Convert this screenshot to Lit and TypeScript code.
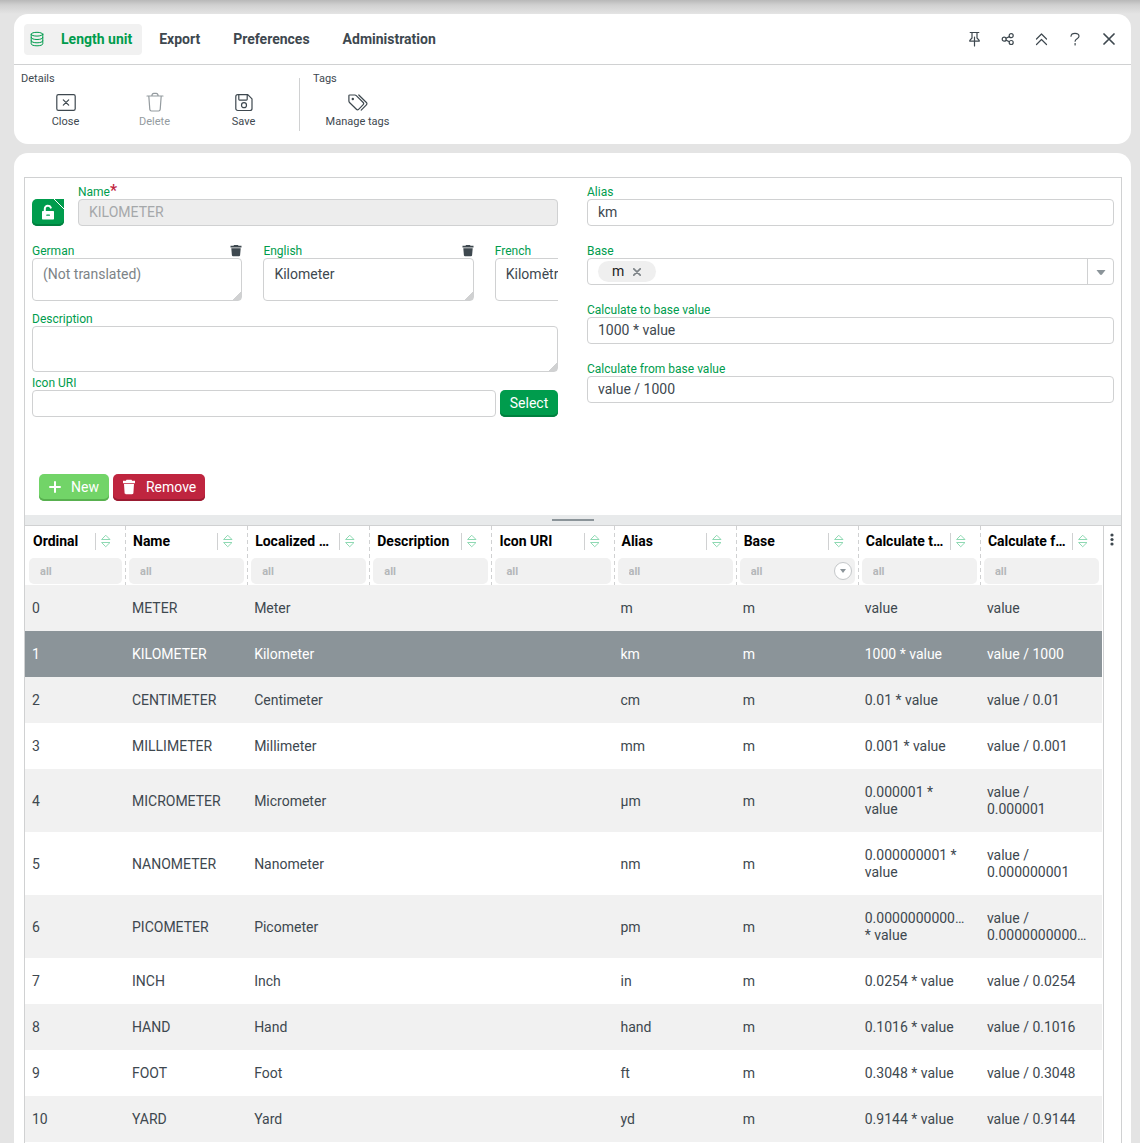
import { LitElement, html, css, svg, nothing } from "lit";
import { customElement, state } from "lit/decorators.js";

interface Unit {
  name: string;
  label: string;
  alias: string;
  to: string;
  from: string;
}

const UNITS: Unit[] = [
  { name: "METER", label: "Meter", alias: "m", to: "value", from: "value" },
  { name: "KILOMETER", label: "Kilometer", alias: "km", to: "1000 * value", from: "value / 1000" },
  { name: "CENTIMETER", label: "Centimeter", alias: "cm", to: "0.01 * value", from: "value / 0.01" },
  { name: "MILLIMETER", label: "Millimeter", alias: "mm", to: "0.001 * value", from: "value / 0.001" },
  { name: "MICROMETER", label: "Micrometer", alias: "µm", to: "0.000001 * value", from: "value / 0.000001" },
  { name: "NANOMETER", label: "Nanometer", alias: "nm", to: "0.000000001 * value", from: "value / 0.000000001" },
  { name: "PICOMETER", label: "Picometer", alias: "pm", to: "0.0000000000… * value", from: "value / 0.0000000000…" },
  { name: "INCH", label: "Inch", alias: "in", to: "0.0254 * value", from: "value / 0.0254" },
  { name: "HAND", label: "Hand", alias: "hand", to: "0.1016 * value", from: "value / 0.1016" },
  { name: "FOOT", label: "Foot", alias: "ft", to: "0.3048 * value", from: "value / 0.3048" },
  { name: "YARD", label: "Yard", alias: "yd", to: "0.9144 * value", from: "value / 0.9144" },
];

const COLUMNS = [
  "Ordinal",
  "Name",
  "Localized …",
  "Description",
  "Icon URI",
  "Alias",
  "Base",
  "Calculate t…",
  "Calculate f…",
];

const icon = (w: number, h: number, body: unknown, cls = "") =>
  html`<svg class="icon ${cls}" width=${w} height=${h} viewBox="0 0 ${w} ${h}" aria-hidden="true">${body}</svg>`;

const icons = {
  database: icon(14, 16, svg`<ellipse cx="7" cy="3.2" rx="5.800" ry="1.900"/><path d="M1.200 3.200v9.600c0 1.200 2.600 2 5.800 2s5.800-.8 5.800-2V3.200M1.200 6.500c0 1.200 2.600 2 5.800 2s5.800-.8 5.800-2M1.200 9.800c0 1.200 2.600 2 5.800 2s5.800-.8 5.800-2"/>`, "thin"),
  close: icon(20, 20, svg`<rect x=".8" y="2.600" width="18.400" height="15.800" rx="1.600"/><path d="M7.300 7.800l5.400 5.400M12.700 7.800l-5.400 5.400"/>`),
  trash: icon(18, 20, svg`<path d="M1 4h16M2.800 4l1 13.400c.1 1 .7 1.600 1.600 1.600h7.200c.9 0 1.500-.6 1.600-1.600l1-13.400M5.800 4c.2-1.600.9-2.600 2-2.600h2.400c1.100 0 1.800 1 2 2.600"/>`),
  save: icon(18, 20, svg`<path d="M2.800 2.700h10l4.200 4.200v9.600c0 1.200-.8 2-2 2H2.800c-1.200 0-2-.8-2-2V4.700c0-1.200.8-2 2-2zM3.800 2.700v4.600c0 .5.300.8.800.8h6.800c.5 0 .8-.3.800-.8V2.700"/><circle cx="9" cy="13.200" r="2.500"/>`),
  tags: icon(20, 20, svg`<path d="M.9 3.600v5.500c0 .6.200 1 .6 1.400l6.900 6.800c.7.700 1.500.7 2.200 0l4.600-4.600c.7-.7.7-1.500 0-2.200L8.300 3.600C7.900 3.200 7.500 3 6.900 3H1.800c-.6 0-.9.200-.9.600zM10.800 3l7.600 7.500c.7.700.7 1.600 0 2.300l-5.200 5.300"/><circle cx="4.800" cy="7" r=".6"/>`),
  pin: icon(14, 16, svg`<path d="M4.200 1.500h8.600M6 1.500V7L3.800 9.300v.9h9.400v-.9L11 7V1.500M8.500 6v9"/>`),
  share: icon(14, 14, svg`<circle cx="4.200" cy="7.200" r="2"/><circle cx="11.200" cy="3.700" r="2"/><circle cx="11.200" cy="10.500" r="2"/><path d="M6 6.300l3.400-1.700M6 8.100l3.400 1.600"/>`),
  collapse: icon(14, 14, svg`<path d="M2.500 7l5-5 5 5M2.500 12.500l5-5 5 5"/>`),
  help: icon(12, 14, svg`<path d="M2 4.200c.2-2 1.700-2.900 4-2.900s4 .9 4 2.900c0 2.600-3.900 2.300-3.900 5"/><path d="M6.100 11.600v1.400"/>`),
  cross: icon(12, 12, svg`<path d="M1 1l10 10M11 1L1 11"/>`, "bold"),
  lock: icon(14, 16, svg`<path fill="currentColor" stroke="none" d="M2 7h10c.6 0 1 .4 1 1v6.500c0 .6-.4 1-1 1H2c-.6 0-1-.4-1-1V8c0-.6.4-1 1-1z"/><path class="notch" d="M5.800 11.200h2.600"/><path d="M3.800 7V4.800C3.800 3 5 1.800 6.800 1.800c1.500 0 2.500.6 3 1.800" stroke-width="2"/>`),
  bin: icon(12, 13, svg`<path fill="currentColor" stroke="none" d="M4 1h4l.5.800H11.500v1.800H.5V1.800H3.500zM1.300 4.200h9.400l-.6 7c-.1.700-.5 1-1.100 1H3c-.6 0-1-.3-1.100-1z"/>`),
  plus: icon(12, 12, svg`<path d="M6 1v10M1 6h10"/>`, "heavy"),
  binLarge: icon(14, 16, svg`<path fill="currentColor" stroke="none" d="M4.500.8h5l.6 1H13v2.400H1V1.800h2.900zM2 5h10l-.6 9c-.1.800-.6 1.200-1.300 1.200H3.900c-.7 0-1.200-.4-1.300-1.200z"/>`),
  sort: icon(10, 14, svg`<path d="M1 5.500h8L5 1.500zM1 8.500h8l-4 4z"/>`, "sort"),
  caret: icon(10, 6, svg`<path fill="currentColor" stroke="none" d="M.5 0h9L6 4.600c-.6.600-1.400.6-2 0z"/>`),
  caretSmall: icon(6, 4, svg`<path fill="currentColor" stroke="none" d="M0 0h6L3 4z"/>`),
  remove: icon(8, 8, svg`<path d="M.8.800l6.400 6.400M7.200.8L.8 7.200"/>`, "bold"),
  dots: icon(4, 14, svg`<g fill="currentColor" stroke="none"><circle cx="2" cy="2" r="1.600"/><circle cx="2" cy="6.500" r="1.600"/><circle cx="2" cy="11" r="1.600"/></g>`),
};

@customElement("app-root")
export class AppRoot extends LitElement {
  @state() private selected = 1;

  static styles = css`
    :host {
      display: flex;
      flex-direction: column;
      gap: 9px;
      height: 100vh;
      box-sizing: border-box;
      padding: 14px 9px 0 14px;
      overflow: hidden;
      background: linear-gradient(#b8b8b8, #d0d0d0 5px, #e4e4e4 14px);
      color: #3e484f;
      font-family: Roboto, "Liberation Sans", sans-serif;
      font-size: 14px;
      line-height: 17px;
    }
    * { box-sizing: border-box; }
    button, input, textarea {
      font: inherit;
      color: inherit;
      margin: 0;
    }
    button { border: 0; background: none; padding: 0; cursor: pointer; }
    .icon {
      display: block;
      flex: none;
      fill: none;
      stroke: currentColor;
      stroke-width: 1.2;
      stroke-linecap: round;
      stroke-linejoin: round;
    }
    .icon.thin { stroke-width: 1; }
    .icon.bold { stroke-width: 1.7; }
    .icon.heavy { stroke-width: 2; }

    .panel { background: #fff; border-radius: 14px; flex: none; }
    .tabs {
      display: flex;
      align-items: center;
      height: 51px;
      padding: 0 15px 0 10px;
      border-bottom: 1px solid #d0d1d2;
    }
    .tab {
      display: flex;
      align-items: center;
      height: 31px;
      margin-right: 33px;
      font-weight: 700;
      border-radius: 4px;
    }
    .tab.active { color: #009c4d; background: #f1f1f1; gap: 17px; padding: 0 10px 0 6px; margin-right: 17px; }
    .tools { display: flex; gap: 20px; margin-left: auto; padding-bottom: 1px; }
    .tools button { display: grid; place-items: center; width: 14px; height: 18px; }
    .groups { display: flex; padding: 7px 7px 13px; font-size: 11px; line-height: 14px; height: 79px; }
    .group { display: flex; flex-direction: column; }
    .group + .group { border-left: 1px solid #d0d1d2; margin: 6px 0 0 11px; padding: 0 0 0 13px; }
    .group + .group .caption { margin-top: -6px; }
    .actions { display: flex; }
    .action {
      display: flex;
      flex-direction: column;
      align-items: center;
      gap: 3px;
      width: 89px;
      padding-top: 6px;
    }
    .action:disabled { color: #949b9f; cursor: default; }

    .body { flex: 1; min-height: 0; padding: 24px 9px 0 10px; border-radius: 14px 14px 0 0; display: flex; flex-direction: column; }
    .frame { flex: 1; border: 1px solid #d0d1d2; border-bottom: 0; display: flex; flex-direction: column; }
    .form { display: grid; grid-template-columns: 526fr 527fr; gap: 29px; padding: 6px 7px 0; min-height: 296px; }
    .col { min-width: 0; display: flex; flex-direction: column; }
    .field { display: flex; flex-direction: column; min-width: 0; }
    .spaced { margin-bottom: 17px; }
    label { color: #009c4d; font-size: 12px; line-height: 17px; height: 15px; }
    .required { color: #bf253f; font-size: 16px; line-height: 10px; font-weight: 500; }
    .box {
      display: block;
      width: 100%;
      height: 27px;
      padding: 0 10px 2px;
      border: 1px solid #d0d1d2;
      border-radius: 4px;
      background: #fff;
      outline: none;
    }
    .box:disabled { background: #ededed; color: #a5a8aa; }
    .box::placeholder { color: #7d8387; opacity: 1; }
    textarea.box { padding: 7px 10px; height: 43px; resize: none; overflow: hidden; }
    textarea.tall { height: 46px; }
    .area { background: linear-gradient(135deg, transparent 50%, #d0d1d2 50%) right bottom / 8px 8px no-repeat #fff; }
    .row { display: flex; align-items: flex-end; }
    .name-row { gap: 14px; }
    .grow { flex: 1; }
    .solid {
      display: flex;
      align-items: center;
      justify-content: center;
      height: 27px;
      padding: 0 9px 1px;
      border-radius: 5px;
      color: #fff;
      background: #009c4d;
      box-shadow: inset 0 -2px #00803f;
    }
    .select { min-width: 58px; }
    .lock { width: 32px; padding: 0 0 1px; position: relative; border-top-right-radius: 0; }
    .lock::after {
      content: "";
      position: absolute;
      top: 0;
      right: 0;
      width: 10px;
      height: 10px;
      background: linear-gradient(45deg, transparent 47%, #fff 47%, #fff 54%, transparent 54%);
    }
    .notch { stroke: #009c4d; }
    .langs { display: flex; gap: 21px; overflow: hidden; margin-bottom: 10px; }
    .lang { flex: none; width: 40%; }
    .lang-head { display: flex; justify-content: space-between; align-items: center; height: 15px; }
    .tall-field { margin-bottom: 3px; }
    .select-row { gap: 4px; }
    .combo { display: flex; align-items: center; padding: 0 0 0 10px; }
    .chip {
      display: flex;
      align-items: center;
      gap: 9px;
      height: 21px;
      padding: 0 15px 0 14px;
      border-radius: 11px;
      background: #efefef;
      color: #222;
    }
    .chip button { color: #7d8387; }
    .combo input { flex: 1; min-width: 0; border: 0; outline: 0; background: none; }
    .drop { display: grid; place-items: center; width: 26px; height: 25px; padding-top: 3px; border-left: 1px solid #d0d1d2; color: #8b9499; }
    .crud { display: flex; gap: 4px; padding: 0 14px 14px; }
    .crud .solid { gap: 10px; }
    .crud .new { padding: 0 10px 1px; background: #72d468; box-shadow: inset 0 -2px #58b04f; }
    .del { background: #bf253f; box-shadow: inset 0 -2px #991b31; }

    .splitter { display: grid; place-items: center; height: 11px; background: #e8eaeb; border-bottom: 1px solid #d0d1d2; }
    .splitter span { width: 42px; height: 2px; background: #8b9499; }
    .grid { flex: 1; display: flex; align-items: stretch; }
    .scroll { flex: 1; min-width: 0; padding-right: 1px; }
    .menu { width: 18px; border-left: 1px solid #d0d1d2; padding: 7px 2px 0 0; display: flex; justify-content: center; align-items: flex-start; }
    table { width: 100%; table-layout: fixed; border-collapse: collapse; }
    .first { width: 100px; }
    th {
      height: 59px;
      padding: 0 3px 1px 4px;
      text-align: left;
      vertical-align: bottom;
      color: #000;
    }
    th + th { background: repeating-linear-gradient(#d0d1d2 0 4px, transparent 4px 7px) left top / 1px 100% no-repeat; }
    .head { display: flex; align-items: center; height: 32px; padding: 0 0 2px 4px; }
    .title { flex: 1; white-space: nowrap; }
    .head button { width: 27px; height: 17px; padding-left: 5px; border-left: 1px solid #d0d1d2; }
    .sort { color: #8fd9b3; stroke-width: 1; }
    .filter { display: flex; align-items: center; height: 26px; border-radius: 5px; background: #f1f1f1; padding: 0 3px 0 11px; }
    .filter input { flex: 1; min-width: 0; width: 0; border: 0; outline: 0; background: none; padding: 0; font-size: 11px; font-weight: 700; }
    .filter input::placeholder { color: #b4b7b9; opacity: 1; }
    .pick { display: grid; place-items: center; width: 18px; height: 18px; border: 1px solid #c4c7c9; border-radius: 50%; background: #fff; color: #8b9499; }
    td { height: 46px; padding: 15px 14px 14px 7px; vertical-align: middle; }
    tbody tr:nth-child(odd) { background: #f1f1f1; }
    tbody tr.selected { background: #8b9499; color: #fff; }
  `;

  private action(glyph: unknown, text: string, disabled = false) {
    return html`<button class="action" ?disabled=${disabled}>${glyph}<span>${text}</span></button>`;
  }

  private field(id: string, label: string, value: string) {
    return html`<div class="field spaced">
      <label for=${id}>${label}</label>
      <input class="box" id=${id} .value=${value} />
    </div>`;
  }

  private lang(name: string, value: string) {
    return html`<div class="field lang">
      <div class="lang-head">
        <label for=${name}>${name}</label>
        <button aria-label="Clear">${icons.bin}</button>
      </div>
      <textarea class="box area" id=${name} placeholder="(Not translated)" .value=${value}></textarea>
    </div>`;
  }

  render() {
    return html`
      <header class="panel">
        <nav class="tabs">
          <button class="tab active">${icons.database}<span>Length unit</span></button>
          <button class="tab">Export</button>
          <button class="tab">Preferences</button>
          <button class="tab">Administration</button>
          <div class="tools">
            <button aria-label="Pin">${icons.pin}</button>
            <button aria-label="Share">${icons.share}</button>
            <button aria-label="Collapse">${icons.collapse}</button>
            <button aria-label="Help">${icons.help}</button>
            <button aria-label="Close">${icons.cross}</button>
          </div>
        </nav>
        <div class="groups">
          <div class="group">
            <span class="caption">Details</span>
            <div class="actions">
              ${this.action(icons.close, "Close")}
              ${this.action(icons.trash, "Delete", true)}
              ${this.action(icons.save, "Save")}
            </div>
          </div>
          <div class="group">
            <span class="caption">Tags</span>
            <div class="actions">${this.action(icons.tags, "Manage tags")}</div>
          </div>
        </div>
      </header>
      <main class="panel body">
        <div class="frame">
          <div class="form">
            <div class="col">
              <div class="row name-row spaced">
                <button class="solid lock" aria-label="Unlock">${icons.lock}</button>
                <div class="field grow">
                  <label for="name">Name<span class="required">*</span></label>
                  <input class="box" id="name" .value=${"KILOMETER"} disabled />
                </div>
              </div>
              <div class="langs">
                ${this.lang("German", "")} ${this.lang("English", "Kilometer")} ${this.lang("French", "Kilomètre")}
              </div>
              <div class="field tall-field">
                <label for="description">Description</label>
                <textarea class="box area tall" id="description"></textarea>
              </div>
              <div class="row select-row">
                <div class="field grow">
                  <label for="uri">Icon URI</label>
                  <input class="box" id="uri" />
                </div>
                <button class="solid select">Select</button>
              </div>
            </div>
            <div class="col">
              ${this.field("alias", "Alias", "km")}
              <div class="field spaced">
                <label for="base">Base</label>
                <div class="box combo">
                  <span class="chip">m<button aria-label="Remove m">${icons.remove}</button></span>
                  <input id="base" />
                  <button class="drop" aria-label="Open">${icons.caret}</button>
                </div>
              </div>
              ${this.field("to", "Calculate to base value", "1000 * value")}
              ${this.field("from", "Calculate from base value", "value / 1000")}
            </div>
          </div>
          <div class="crud">
            <button class="solid new">${icons.plus}New</button>
            <button class="solid del">${icons.binLarge}Remove</button>
          </div>
          <div class="splitter"><span></span></div>
          <div class="grid">
            <div class="scroll">
              <table>
                <thead>
                  <tr>
                    ${COLUMNS.map(
                      (c, i) => html`<th class=${i === 0 ? "first" : ""}>
                        <div class="head">
                          <span class="title">${c}</span>
                          <button aria-label="Sort">${icons.sort}</button>
                        </div>
                        <div class="filter">
                          <input placeholder="all" aria-label=${c} />
                          ${c === "Base" ? html`<button class="pick" aria-label="Choose">${icons.caretSmall}</button>` : nothing}
                        </div>
                      </th>`
                    )}
                  </tr>
                </thead>
                <tbody>
                  ${UNITS.map(
                    (u, i) => html`<tr class=${i === this.selected ? "selected" : ""} @click=${() => (this.selected = i)}>
                      <td>${i}</td>
                      <td>${u.name}</td>
                      <td>${u.label}</td>
                      <td></td>
                      <td></td>
                      <td>${u.alias}</td>
                      <td>m</td>
                      <td>${u.to}</td>
                      <td>${u.from}</td>
                    </tr>`
                  )}
                </tbody>
              </table>
            </div>
            <div class="menu">
              <button aria-label="Table menu">${icons.dots}</button>
            </div>
          </div>
        </div>
      </main>
    `;
  }
}
